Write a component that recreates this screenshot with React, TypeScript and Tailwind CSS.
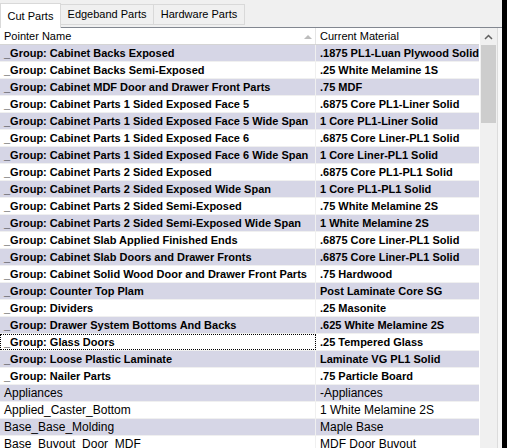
import React from 'react';

type Row = { name: string; material: string; bold?: boolean };

const rows: Row[] = [
  { name: '_Group: Cabinet Backs Exposed', material: '.1875 PL1-Luan Plywood Solid', bold: true },
  { name: '_Group: Cabinet Backs Semi-Exposed', material: '.25 White Melamine 1S', bold: true },
  { name: '_Group: Cabinet MDF Door and Drawer Front Parts', material: '.75 MDF', bold: true },
  { name: '_Group: Cabinet Parts 1 Sided Exposed Face 5', material: '.6875 Core PL1-Liner Solid', bold: true },
  { name: '_Group: Cabinet Parts 1 Sided Exposed Face 5 Wide Span', material: '1 Core PL1-Liner Solid', bold: true },
  { name: '_Group: Cabinet Parts 1 Sided Exposed Face 6', material: '.6875 Core Liner-PL1 Solid', bold: true },
  { name: '_Group: Cabinet Parts 1 Sided Exposed Face 6 Wide Span', material: '1 Core Liner-PL1 Solid', bold: true },
  { name: '_Group: Cabinet Parts 2 Sided Exposed', material: '.6875 Core PL1-PL1 Solid', bold: true },
  { name: '_Group: Cabinet Parts 2 Sided Exposed Wide Span', material: '1 Core PL1-PL1 Solid', bold: true },
  { name: '_Group: Cabinet Parts 2 Sided Semi-Exposed', material: '.75 White Melamine 2S', bold: true },
  { name: '_Group: Cabinet Parts 2 Sided Semi-Exposed Wide Span', material: '1 White Melamine 2S', bold: true },
  { name: '_Group: Cabinet Slab Applied Finished Ends', material: '.6875 Core Liner-PL1 Solid', bold: true },
  { name: '_Group: Cabinet Slab Doors and Drawer Fronts', material: '.6875 Core Liner-PL1 Solid', bold: true },
  { name: '_Group: Cabinet Solid Wood Door and Drawer Front Parts', material: '.75 Hardwood', bold: true },
  { name: '_Group: Counter Top Plam', material: 'Post Laminate Core SG', bold: true },
  { name: '_Group: Dividers', material: '.25 Masonite', bold: true },
  { name: '_Group: Drawer System Bottoms And Backs', material: '.625 White Melamine 2S', bold: true },
  { name: '_Group: Glass Doors', material: '.25 Tempered Glass', bold: true },
  { name: '_Group: Loose Plastic Laminate', material: 'Laminate VG PL1 Solid', bold: true },
  { name: '_Group: Nailer Parts', material: '.75 Particle Board', bold: true },
  { name: 'Appliances', material: '-Appliances' },
  { name: 'Applied_Caster_Bottom', material: '1 White Melamine 2S' },
  { name: 'Base_Base_Molding', material: 'Maple Base' },
  { name: 'Base_Buyout_Door_MDF', material: 'MDF Door Buyout' },
];

const FOCUSED = 17;

export default function App() {
  return (
    <div
      className="w-[507px] h-[448px] overflow-hidden flex bg-[#f0f0f0] text-black text-[11px]"
      style={{ fontFamily: '"Liberation Sans", Arial, sans-serif' }}
    >
      <div className="w-[502px] flex flex-col">
        {/* tabs */}
        <div className="h-[27px] flex items-end relative z-10">
          <div className="h-[25px] w-[61px] bg-white border border-b-0 border-[#d9d9d9] flex items-center justify-center mb-[-1px]">
            Cut Parts
          </div>
          <div className="h-[21px] w-[93px] mb-[2px] border border-l-0 border-[#d9d9d9] flex items-center justify-center">
            Edgeband Parts
          </div>
          <div className="h-[21px] w-[91px] mb-[2px] border border-l-0 border-[#d9d9d9] flex items-center justify-center">
            Hardware Parts
          </div>
        </div>

        {/* grid */}
        <div className="flex-1 flex border-t border-[#828790] min-h-0">
          <div className="w-[479px] flex flex-col bg-white overflow-hidden">
            <div className="h-[17px] flex bg-white border-b border-[#d5d5d5] shrink-0">
              <div className="w-[316px] border-r border-[#e5e5e5] pl-[4px] flex items-center relative">
                Pointer Name
                <svg className="absolute right-[3px] top-[6px]" width="8" height="5" viewBox="0 0 8 5">
                  <path d="M0 5 L4 1 L8 5 Z" fill="#bcbcbc" />
                </svg>
              </div>
              <div className="flex-1 pl-[4px] flex items-center">Current Material</div>
            </div>
            {rows.map((r, i) => (
              <div
                key={r.name}
                className={`h-[17px] flex shrink-0 border-b border-[#f0f0f0] ${i % 2 === 0 ? 'bg-[#d6d6e6]' : 'bg-white'} ${r.bold ? 'font-bold text-[11px]' : 'text-[12px]'}`}
              >
                <div
                  className={`w-[316px] pl-[4px] flex items-center whitespace-nowrap overflow-hidden border-r border-[#f0f0f0] ${i === FOCUSED ? 'outline-1 outline-dotted outline-black -outline-offset-1' : ''}`}
                >
                  {r.name}
                </div>
                <div className="flex-1 pl-[4px] flex items-center whitespace-nowrap overflow-hidden">
                  {r.material}
                </div>
              </div>
            ))}
          </div>

          {/* scrollbar */}
          <div className="w-[18px] bg-[#f0f0f0] border-l border-white flex flex-col">
            <div className="h-[17px] flex items-center justify-center">
              <svg width="9" height="6" viewBox="0 0 9 6">
                <path d="M1 5 L4.5 1.5 L8 5" stroke="#606060" strokeWidth="1.5" fill="none" />
              </svg>
            </div>
            <div className="mx-[1px] h-[78px] bg-[#cdcdcd]" />
          </div>
          <div className="w-[5px] border-l border-[#dcdcdc] bg-[#f7f7f7]" />
        </div>
      </div>
      <div className="w-[5px] bg-black" />
    </div>
  );
}
